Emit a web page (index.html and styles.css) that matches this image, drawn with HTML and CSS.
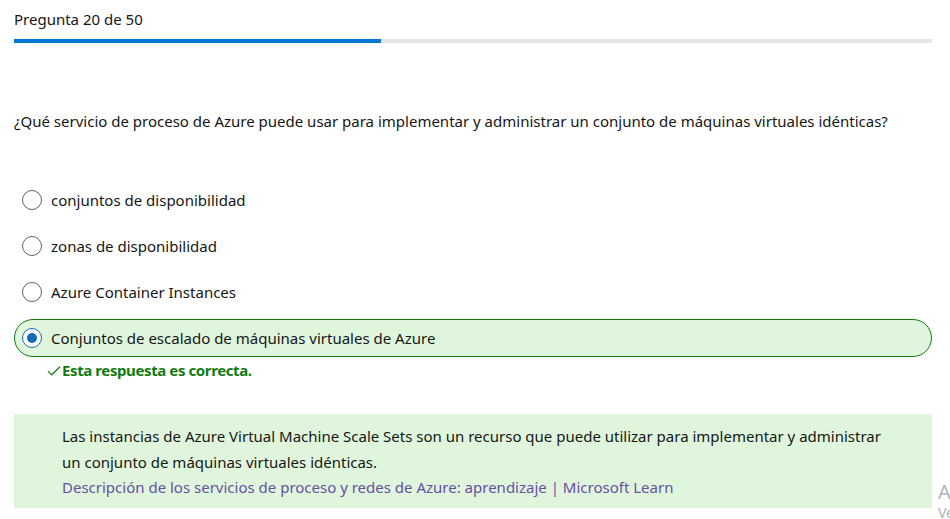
FILE: index.html
```html
<!DOCTYPE html>
<html lang="es">
<head>
<meta charset="utf-8">
<title>Pregunta 20 de 50</title>
<link rel="stylesheet" href="styles.css">
</head>
<body>
<main class="quiz">
  <header class="quiz-header">
    <div class="counter">Pregunta 20 de 50</div>
    <div class="progress"><div class="progress-fill" style="width: 40%"></div></div>
  </header>

  <p class="question">¿Qué servicio de proceso de Azure puede usar para implementar y administrar un conjunto de máquinas virtuales idénticas?</p>

  <div class="options">
    <div class="option"><span class="radio"></span><span class="label">conjuntos de disponibilidad</span></div>
    <div class="option"><span class="radio"></span><span class="label">zonas de disponibilidad</span></div>
    <div class="option"><span class="radio"></span><span class="label">Azure Container Instances</span></div>
    <div class="option option-correct"><span class="radio radio-checked"></span><span class="label">Conjuntos de escalado de máquinas virtuales de Azure</span></div>
  </div>

  <div class="feedback">
    <svg class="check" width="14" height="10" viewBox="0 0 14 10"><path d="M1 5.2 L4.6 8.8 L13 0.8" fill="none" stroke="#107c10" stroke-width="1.2"/></svg>
    <span>Esta respuesta es correcta.</span>
  </div>

  <div class="explanation">
    <p>Las instancias de Azure Virtual Machine Scale Sets son un recurso que puede utilizar para implementar y administrar un conjunto de máquinas virtuales idénticas.</p>
    <a class="learn-link" href="#">Descripción de los servicios de proceso y redes de Azure: aprendizaje | Microsoft Learn</a>
  </div>
</main>
<div class="watermark">
  <div class="wm-title">Activar Windows</div>
  <div class="wm-sub">Ve a Configuración para activar Windows.</div>
</div>
</body>
</html>
```

FILE: styles.css
```css
html, body {
  margin: 0;
  padding: 0;
  background: #ffffff;
  overflow: hidden;
}
body {
  font-family: "Noto Sans", "Open Sans", sans-serif;
  font-size: 15px;
  color: #161616;
  width: 950px;
  height: 519px;
  position: relative;
}
.quiz {
  padding: 7px 18px 0 14px;
}
.counter {
  line-height: 24px;
  height: 24px;
}
.progress {
  margin-top: 8px;
  height: 4px;
  background: #e6e6e6;
}
.progress-fill {
  height: 4px;
  background: #0078d4;
}
.question {
  margin: 66px 0 0 0;
  line-height: 24px;
}
.options {
  margin-top: 48px;
  display: flex;
  flex-direction: column;
  gap: 8px;
}
.option {
  height: 38px;
  box-sizing: border-box;
  border: 1px solid transparent;
  border-radius: 19px;
  display: flex;
  align-items: center;
  padding-left: 7px;
  gap: 9px;
}
.option-correct {
  background: #dff6dd;
  border-color: #107c10;
}
.radio {
  width: 20px;
  height: 20px;
  box-sizing: border-box;
  border: 1px solid #616161;
  border-radius: 50%;
  flex: none;
  background: #ffffff;
  display: flex;
  align-items: center;
  justify-content: center;
}
.radio-checked {
  border: 1.5px solid #0f6cbd;
}
.radio-checked::after {
  content: "";
  width: 10px;
  height: 10px;
  border-radius: 50%;
  background: #0f6cbd;
}
.feedback {
  display: flex;
  align-items: center;
  gap: 1px;
  margin-top: 1px;
  padding-left: 33px;
  height: 24px;
  color: #107c10;
  font-weight: 700;
  letter-spacing: -0.4px;
}
.check {
  margin-top: 2px;
}
.explanation {
  margin-top: 32px;
  background: #dff6dd;
  padding: 10px 48px 7px 48px;
  line-height: 25.5px;
}
.explanation p {
  margin: 0;
}
.learn-link {
  color: #6750a4;
  text-decoration: none;
}
.watermark {
  position: absolute;
  left: 938px;
  top: 480px;
  width: 12px;
  overflow: hidden;
  color: #b3b3b3;
  white-space: nowrap;
}
.wm-title {
  font-size: 20px;
  line-height: 24px;
}
.wm-sub {
  font-size: 14px;
  line-height: 18px;
}
```
